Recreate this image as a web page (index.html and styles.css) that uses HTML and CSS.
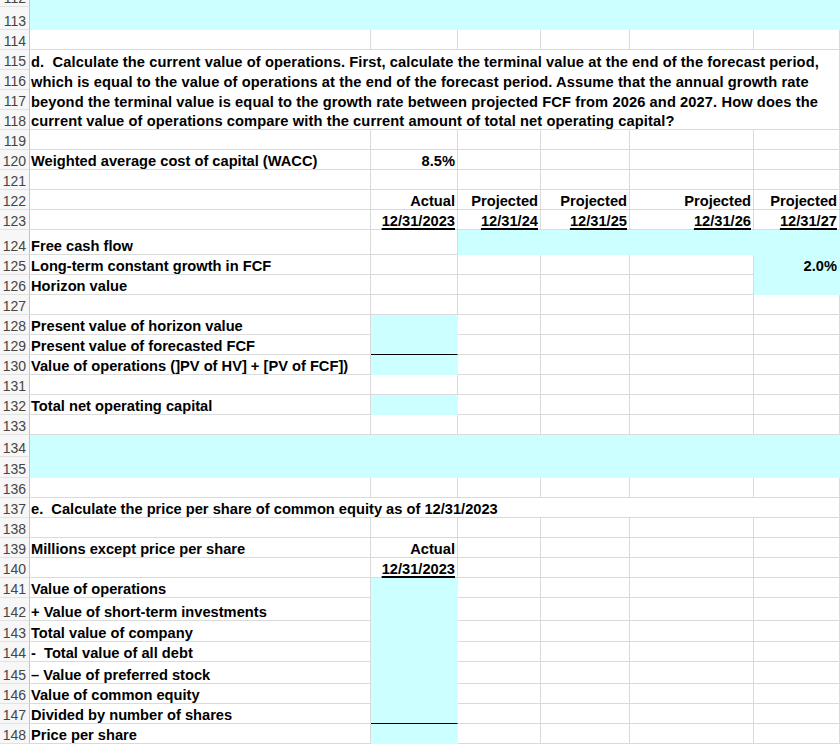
FILE: index.html
```html
<!DOCTYPE html>
<html lang="en">
<head>
<meta charset="utf-8">
<title>Valuation worksheet</title>
<link rel="stylesheet" href="styles.css">
</head>
<body>
<div class="sheet">
  <div class="row r112"><div class="c rh">112</div><div class="c fill span"></div></div>
  <div class="row r113"><div class="c rh">113</div><div class="c fill span"></div></div>
  <div class="row"><div class="c rh">114</div><div class="c"></div><div class="c"></div><div class="c"></div><div class="c"></div><div class="c"></div><div class="c"></div></div>
  <div class="row block">
    <div class="c rh stack"><div class="n">115</div><div class="n">116</div><div class="n">117</div><div class="n">118</div></div>
    <div class="c span question"><div class="line">d.  Calculate the current value of operations. First, calculate the terminal value at the end of the forecast period,</div><div class="line">which is equal to the value of operations at the end of the forecast period. Assume that the annual growth rate</div><div class="line">beyond the terminal value is equal to the growth rate between projected FCF from 2026 and 2027. How does the</div><div class="line">current value of operations compare with the current amount of total net operating capital?</div></div>
  </div>
  <div class="row"><div class="c rh">119</div><div class="c"></div><div class="c"></div><div class="c"></div><div class="c"></div><div class="c"></div><div class="c"></div></div>
  <div class="row"><div class="c rh">120</div><div class="c">Weighted average cost of capital (WACC)</div><div class="c r">8.5%</div><div class="c"></div><div class="c"></div><div class="c"></div><div class="c"></div></div>
  <div class="row"><div class="c rh">121</div><div class="c"></div><div class="c"></div><div class="c"></div><div class="c"></div><div class="c"></div><div class="c"></div></div>
  <div class="row"><div class="c rh">122</div><div class="c"></div><div class="c r">Actual</div><div class="c r">Projected</div><div class="c r">Projected</div><div class="c r">Projected</div><div class="c r">Projected</div></div>
  <div class="row"><div class="c rh">123</div><div class="c"></div><div class="c r"><span class="u">12/31/2023</span></div><div class="c r"><span class="u">12/31/24</span></div><div class="c r"><span class="u">12/31/25</span></div><div class="c r"><span class="u">12/31/26</span></div><div class="c r"><span class="u">12/31/27</span></div></div>
  <div class="row h25"><div class="c rh">124</div><div class="c">Free cash flow</div><div class="c"></div><div class="c fill span-c"></div></div>
  <div class="row"><div class="c rh">125</div><div class="c">Long-term constant growth in FCF</div><div class="c"></div><div class="c"></div><div class="c"></div><div class="c"></div><div class="c fill r">2.0%</div></div>
  <div class="row"><div class="c rh">126</div><div class="c">Horizon value</div><div class="c"></div><div class="c"></div><div class="c"></div><div class="c"></div><div class="c fill"></div></div>
  <div class="row"><div class="c rh">127</div><div class="c"></div><div class="c"></div><div class="c"></div><div class="c"></div><div class="c"></div><div class="c"></div></div>
  <div class="row"><div class="c rh">128</div><div class="c">Present value of horizon value</div><div class="c fill"></div><div class="c"></div><div class="c"></div><div class="c"></div><div class="c"></div></div>
  <div class="row"><div class="c rh">129</div><div class="c">Present value of forecasted FCF</div><div class="c fill bb"></div><div class="c"></div><div class="c"></div><div class="c"></div><div class="c"></div></div>
  <div class="row"><div class="c rh">130</div><div class="c">Value of operations (]PV of HV] + [PV of FCF])</div><div class="c fill"></div><div class="c"></div><div class="c"></div><div class="c"></div><div class="c"></div></div>
  <div class="row"><div class="c rh">131</div><div class="c"></div><div class="c"></div><div class="c"></div><div class="c"></div><div class="c"></div><div class="c"></div></div>
  <div class="row"><div class="c rh">132</div><div class="c">Total net operating capital</div><div class="c fill"></div><div class="c"></div><div class="c"></div><div class="c"></div><div class="c"></div></div>
  <div class="row"><div class="c rh">133</div><div class="c"></div><div class="c"></div><div class="c"></div><div class="c"></div><div class="c"></div><div class="c"></div></div>
  <div class="row h22"><div class="c rh">134</div><div class="c fill span"></div></div>
  <div class="row h21"><div class="c rh">135</div><div class="c fill span"></div></div>
  <div class="row"><div class="c rh">136</div><div class="c"></div><div class="c"></div><div class="c"></div><div class="c"></div><div class="c"></div><div class="c"></div></div>
  <div class="row"><div class="c rh">137</div><div class="c span">e.  Calculate the price per share of common equity as of 12/31/2023</div></div>
  <div class="row"><div class="c rh">138</div><div class="c"></div><div class="c"></div><div class="c"></div><div class="c"></div><div class="c"></div><div class="c"></div></div>
  <div class="row"><div class="c rh">139</div><div class="c">Millions except price per share</div><div class="c r">Actual</div><div class="c"></div><div class="c"></div><div class="c"></div><div class="c"></div></div>
  <div class="row"><div class="c rh">140</div><div class="c"></div><div class="c r"><span class="u">12/31/2023</span></div><div class="c"></div><div class="c"></div><div class="c"></div><div class="c"></div></div>
  <div class="row"><div class="c rh">141</div><div class="c">Value of operations</div><div class="c fill"></div><div class="c"></div><div class="c"></div><div class="c"></div><div class="c"></div></div>
  <div class="row h23"><div class="c rh">142</div><div class="c">+ Value of short-term investments</div><div class="c fill"></div><div class="c"></div><div class="c"></div><div class="c"></div><div class="c"></div></div>
  <div class="row h21"><div class="c rh">143</div><div class="c">Total value of company</div><div class="c fill"></div><div class="c"></div><div class="c"></div><div class="c"></div><div class="c"></div></div>
  <div class="row"><div class="c rh">144</div><div class="c">-  Total value of all debt</div><div class="c fill"></div><div class="c"></div><div class="c"></div><div class="c"></div><div class="c"></div></div>
  <div class="row h22"><div class="c rh">145</div><div class="c">– Value of preferred stock</div><div class="c fill"></div><div class="c"></div><div class="c"></div><div class="c"></div><div class="c"></div></div>
  <div class="row"><div class="c rh">146</div><div class="c">Value of common equity</div><div class="c fill"></div><div class="c"></div><div class="c"></div><div class="c"></div><div class="c"></div></div>
  <div class="row"><div class="c rh">147</div><div class="c">Divided by number of shares</div><div class="c fill bb"></div><div class="c"></div><div class="c"></div><div class="c"></div><div class="c"></div></div>
  <div class="row"><div class="c rh">148</div><div class="c">Price per share</div><div class="c fill"></div><div class="c"></div><div class="c"></div><div class="c"></div><div class="c"></div></div>
</div>
</body>
</html>
```
FILE: styles.css
```css
html, body {
  margin: 0;
  padding: 0;
  background: #ffffff;
  overflow: hidden;
}
body {
  font-family: "Liberation Sans", Arial, sans-serif;
  color: #000;
}
.sheet {
  width: 840px;
  margin-top: -13px;
}
.row {
  display: grid;
  grid-template-columns: 30px 341px 87px 83px 89px 124px 86px;
  height: 20px;
}
.r113 { height: 23px; }
.h21 { height: 21px; }
.h22 { height: 22px; }
.h23 { height: 23px; }
.h25 { height: 25px; }
.block { height: 80px; }

.c {
  box-sizing: border-box;
  border-right: 1px solid #dadada;
  border-bottom: 1px solid #dadada;
  display: flex;
  align-items: flex-end;
  padding: 0 2px 0 1px;
  font-size: 14.67px;
  font-weight: bold;
  line-height: 16px;
  white-space: pre;
  min-width: 0;
}
.r { justify-content: flex-end; }
.span { grid-column: 2 / -1; }
.span-c { grid-column: 4 / -1; }
.rh {
  background: #f7f7f7;
  border-right-color: #c4c4c4;
  border-bottom-color: #e2e2e2;
  color: #454545;
  font-weight: normal;
  font-size: 14px;
  justify-content: flex-end;
  padding-right: 3px;
}
.stack {
  flex-direction: column;
  align-items: stretch;
  justify-content: flex-start;
  padding: 0;
}
.stack .n {
  height: 20px;
  box-sizing: border-box;
  display: flex;
  align-items: flex-end;
  justify-content: flex-end;
  padding-right: 3px;
  border-bottom: 1px solid #e2e2e2;
}
.stack .n:last-child { border-bottom: 0; height: 19px; }
.question {
  flex-direction: column;
  align-items: stretch;
  justify-content: flex-start;
}
.question .line {
  height: 20px;
  display: flex;
  align-items: flex-end;
  letter-spacing: 0.1px;
}
.question .line:last-child { height: 19px; }
.fill {
  background: #ccffff;
  border-color: transparent;
}
.fill.bb { border-bottom-color: #000; }
.u {
  text-decoration: underline;
  text-decoration-thickness: 2px;
  text-underline-offset: 2px;
}
```
